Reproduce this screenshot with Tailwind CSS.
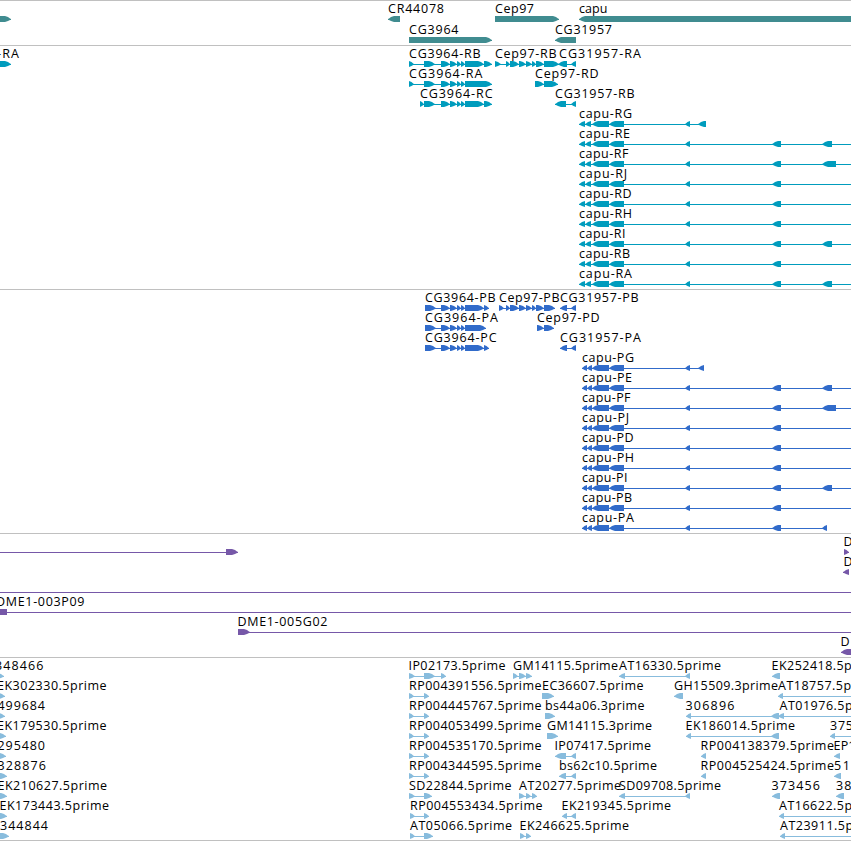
<!DOCTYPE html>
<html lang="en">
<head>
<meta charset="utf-8">
<title>Genome tracks</title>
<script src="https://cdn.jsdelivr.net/npm/@tailwindcss/browser@4"></script>
</head>
<body class="bg-white overflow-hidden">
<main id="tracks" class="flex flex-col w-[851px] h-[841px] overflow-hidden font-['Open_Sans','Noto_Sans',sans-serif] text-[12.5px] text-black">
  <section data-track="genes" class="flex flex-col shrink-0 border-t border-[#c0c0c0] pt-px pb-px text-[#408c90]"></section>
  <section data-track="transcripts" class="flex flex-col shrink-0 border-t border-[#c0c0c0] pt-px pb-[2px] text-[#009cbd]"></section>
  <section data-track="proteins" class="flex flex-col shrink-0 border-t border-[#c0c0c0] pt-px pb-[2px] text-[#316bca]"></section>
  <section data-track="clones" class="flex flex-col shrink-0 border-t border-[#c0c0c0] pt-px pb-[2px] text-[#7658a8]"></section>
  <section data-track="ests" class="flex flex-col shrink-0 border-y border-[#c0c0c0] pt-px pb-px text-[#88bcdd]"></section>
</main>
<script>
// Feature: [label, labelStart, labelEnd (0 = natural width), strand, exons [[from,to],...], optional connector [from,to]]
const W = 851;
const body = [[441,450],[450,457],[457,461],[461,465]];
const cep = [[506,510],[510,519],[519,526],[526,532],[532,536],[536,544]];
const lastLetter = { G: 632, E: 630, F: 628.5, J: 627, D: 631.5, H: 632, I: 625.5, B: 630, A: 632 };
const capu = (name, prot, extra, end) => {
  const start = prot ? [[582,587],[587,592]] : [[579,585],[585,591]];
  return [[name, prot ? 582 : 579, lastLetter[name.slice(-1)] + (prot ? 2 : 0), -1, [...start, [592,609],[609,624],[685,690], ...extra], [prot ? 583 : 580, end || W]]];
};
const m = [772,781];
const est = (name, x, end, tip) => [name, x, end, 1, [[-6, tip]]];
const rp = (name, x = 409) => [name, x, x + 132.5, 1, [[x, x + 5],[424,429]]];
const data = {
  genes: [
    [['',0,0,1,[[-6,11]]],['CR44078',388,444,-1,[[388,400]]],['Cep97',495,534,1,[[495,559]]],['capu',579,607.5,-1,[[579,870]]]],
    [['CG3964',409,458.5,1,[[409,492]]],['CG31957',555,612,-1,[[555,576]]]]
  ],
  transcripts: [
    [['-RA',-3,19,1,[[-6,11]]],['CG3964-RB',409,480.5,1,[[409,414],[424,435],...body,[465,484],[484,492]]],['Cep97-RB',495,556.5,1,[[495,501],...cep,[544,559]]],['CG31957-RA',559,641,-1,[[558,567],[571,576]]]],
    [['CG3964-RA',409,482.5,1,[[409,414],[424,435],...body,[465,492]]],['Cep97-RD',535,598.5,1,[[535,544],[544,558]]]],
    [['CG3964-RC',420,492.5,1,[[420,424],[424,435],...body,[465,484],[484,492]]],['CG31957-RB',555,634.5,-1,[[555,566],[571,576]]]],
    capu('capu-RG',0,[[698,706]],706), capu('capu-RE',0,[m,[822,832]]), capu('capu-RF',0,[m,[822,836]]),
    capu('capu-RJ',0,[m]), capu('capu-RD',0,[m]), capu('capu-RH',0,[m]),
    capu('capu-RI',0,[m,[822,832]]), capu('capu-RB',0,[m]), capu('capu-RA',0,[m,[822,832]])
  ],
  proteins: [
    [['CG3964-PB',425,495.5,1,[[425,436],...body,[465,484],[484,489]]],['Cep97-PB',499,559.5,1,[[499,504],...cep,[544,555]]],['CG31957-PB',560,638.5,-1,[[560,567],[571,576]]]],
    [['CG3964-PA',425,498,1,[[425,436],...body,[465,486]]],['Cep97-PD',537,599.5,1,[[537,544],[544,554]]]],
    [['CG3964-PC',425,496.5,1,[[425,436],...body,[465,484],[484,489]]],['CG31957-PA',560,641,-1,[[560,567],[571,576]]]],
    capu('capu-PG',1,[[698,704]],704), capu('capu-PE',1,[m,[822,832]]), capu('capu-PF',1,[m,[822,836]]),
    capu('capu-PJ',1,[m]), capu('capu-PD',1,[m]), capu('capu-PH',1,[m]),
    capu('capu-PI',1,[m,[822,832]]), capu('capu-PB',1,[m]), capu('capu-PA',1,[m,[822,827]],827)
  ],
  clones: [
    [['',0,0,1,[[226,238]],[0,230]],['D',843.5,0,1,[[844,849]]]],
    [['D',843.5,0,-1,[[843,849]]]],
    [['',0,0,1,[],[0,W]]],
    [['DME1-003P09',-4,84.5,-1,[[-8,7]],[0,W]]],
    [['DME1-005G02',237.5,327.5,1,[[238,250]],[238,W]]],
    [['D',840.5,0,-1,[[841,870]]]]
  ],
  ests: [
    [est('348466',-5,43.5,4),['IP02173.5prime',408.5,505.5,1,[[409,415],[424,435],[441,446]]],['GM14115.5prime',513,618,1,[[513,518],[519,526],[526,532]]],['AT16330.5prime',619,721,-1,[[619,625],[685,690]]],['EK252418.5prime',771.5,880.5,-1,[[772,780]]]],
    [est('EK302330.5prime',-3,106.5,5),rp('RP004391556.5prime'),['EC36607.5prime',542,643.5,1,[[542,554]]],['GH15509.3prime',674,778,-1,[[674,683]]],['AT18757.5prime',778,880,-1,[[778,783]],[779,W]]],
    [est('499684',-2.5,45,5),rp('RP004445767.5prime'),['bs44a06.3prime',545,644.5,1,[[545,555]]],['306896',685.5,734.5,-1,[[686,691],[771,779]]],['AT01976.5prime',779.5,881.5,-1,[[778,784]],[779,W]]],
    [est('EK179530.5prime',-3,106.5,6),rp('RP004053499.5prime'),['GM14115.3prime',547,652,1,[[547,558]]],['EK186014.5prime',685.5,795,-1,[[686,691],[771,779]]],['375',830,853,-1,[[830,835]],[831,W]]],
    [est('295480',-2.5,45,6),rp('RP004535170.5prime'),['IP07417.5prime',554.5,651,-1,[[555,566],[571,576]]],['RP004138379.5prime',700.5,834,-1,[[701,706]]],['EP1',833.5,855.5,-1,[[834,840]]]],
    [est('328876',-2.5,46,7),rp('RP004344595.5prime'),['bs62c10.5prime',559,657,-1,[[559,566],[571,576]]],['RP004525424.5prime',700.5,834,-1,[[701,706]]],['51',834,850,-1,[[834,841]]]],
    [est('EK210627.5prime',-2.5,107,7),['SD22844.5prime',409,511.5,1,[[409,415],[424,432]]],['AT20277.5prime',519,621,1,[[519,525],[526,531],[532,537]]],['SD09708.5prime',619,721,-1,[[619,625],[685,690]]],['373456',771.5,820,-1,[[772,780]]],['38',836,851.5,-1,[[836,844]]]],
    [est('EK173443.5prime',-0.5,109,7),rp('RP004553434.5prime',410),['EK219345.5prime',561.5,671,-1,[[562,567],[571,576]]],['AT16622.5prime',779,881,-1,[[779,784]],[780,W]]],
    [est('344844',0,48,9),['AT05066.5prime',410,512,1,[[410,415],[424,433]]],['EK246625.5prime',519.5,629,1,[[520,525],[526,531]]],['AT23911.5prime',780,882,-1,[[780,785]],[781,W]]]
  ]
};
// Block arrow, 6px high, with a blunt convex head.
function arrow(a, b, s) {
  const t = Math.min(6, b - a), X = d => s > 0 ? b - d : a + d, tail = s > 0 ? a : b;
  return `M${tail} 14H${X(t)}L${X(t / 2)} 15L${X(t / 6)} 16.5L${X(0)} 17V18L${X(t / 6)} 18L${X(t / 2)} 19L${X(t)} 20H${tail}Z`;
}
for (const [key, rows] of Object.entries(data)) {
  const h = key === 'genes' ? 21 : 20;
  document.querySelector(`[data-track=${key}]`).innerHTML = rows.map(row =>
    `<svg class="block shrink-0 overflow-visible" width="${W}" height="${h}">` + row.map(([label, x, end, s, ex, line]) => {
      const l = line || (ex.length > 1 ? [ex[0][0] + 1, ex[ex.length - 1][1] - 1] : null);
      return (l ? `<rect x="${l[0]}" y="17" width="${l[1] - l[0]}" height="1" fill="currentColor"/>` : '') +
        `<path fill="currentColor" d="${ex.map(e => arrow(e[0], e[1], s)).join('')}"/>` +
        (label ? `<text x="${x}" y="11" fill="#000"${end ? ` textLength="${end - x}"` : ''}>${label}</text>` : '');
    }).join('') + '</svg>').join('');
}
</script>
</body>
</html>
